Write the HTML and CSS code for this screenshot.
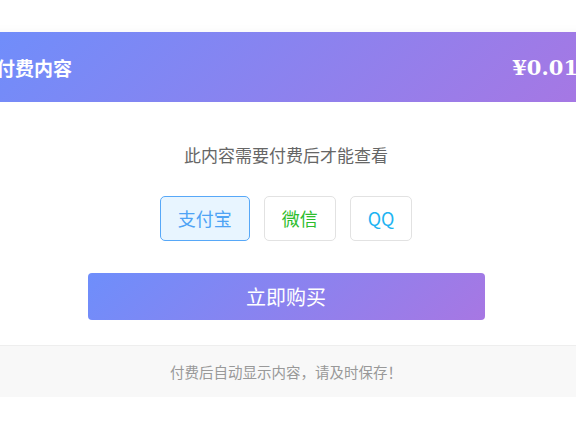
FILE: index.html
```html
<!DOCTYPE html>
<html lang="zh-CN">
<head>
  <meta charset="UTF-8">
  <meta name="viewport" content="width=device-width, initial-scale=1.0">
  <title>付费内容</title>
  <link rel="stylesheet" href="styles.css">
</head>
<body>
  <div class="page">
    <div class="pay-card">
      <div class="pay-header">
        <div class="pay-title">付费内容</div>
        <div class="pay-price">¥0.01</div>
      </div>

      <div class="pay-body">
        <p class="pay-tip">此内容需要付费后才能查看</p>

        <div class="pay-methods">
          <button class="method alipay active">支付宝</button>
          <button class="method wechat">微信</button>
          <button class="method qq">QQ</button>
        </div>

        <button class="buy-btn">立即购买</button>
      </div>

      <div class="pay-footer">付费后自动显示内容，请及时保存！</div>
    </div>
  </div>
</body>
</html>
```

FILE: styles.css
```css
html, body {
  margin: 0;
  padding: 0;
  background: #fff;
  overflow: hidden;
}
body {
  font-family: "Noto Sans CJK SC", "Noto Sans", sans-serif;
}
.page {
  display: flex;
  justify-content: center;
  padding: 32px 4px 0 0;
}
.pay-card {
  flex: 0 0 620px;
  width: 620px;
  background: #fff;
  box-shadow: 0 5px 14px rgba(0, 0, 0, 0.08);
}
.pay-header {
  height: 70px;
  padding: 0 18px 0 20px;
  display: flex;
  align-items: center;
  justify-content: space-between;
  background: linear-gradient(135deg, #6e8efb, #a777e3);
  color: #fff;
}
.pay-title {
  font-size: 19px;
  font-weight: bold;
}
.pay-price {
  font-family: "DejaVu Serif", serif;
  font-size: 21px;
  font-weight: bold;
}
.pay-body {
  padding: 41px 20px 25px;
  display: flex;
  flex-direction: column;
  align-items: center;
}
.pay-tip {
  margin: 0 0 29px;
  font-size: 17px;
  line-height: 24px;
  color: #666;
}
.pay-methods {
  display: flex;
  gap: 14px;
  margin-bottom: 32px;
}
.method {
  font-family: inherit;
  font-size: 18px;
  line-height: 21px;
  padding: 11px 17px;
  background: #fff;
  border: 1px solid #e2e2e2;
  border-radius: 5px;
  cursor: pointer;
}
.method.alipay {
  color: #4ea3f5;
}
.method.alipay.active {
  background: #e8f5ff;
  border-color: #57a8f8;
}
.method.wechat {
  color: #2dbd2d;
}
.method.qq {
  color: #1eb4f2;
}
.buy-btn {
  width: 397px;
  height: 47px;
  border: none;
  border-radius: 4px;
  background: linear-gradient(135deg, #6e8efb, #a777e3);
  color: #fff;
  font-family: inherit;
  font-size: 20px;
  cursor: pointer;
}
.pay-footer {
  border-top: 1px solid #eee;
  background: #f8f8f8;
  padding: 16px 0 15px;
  text-align: center;
  font-size: 14.5px;
  line-height: 20px;
  color: #999;
}
```
